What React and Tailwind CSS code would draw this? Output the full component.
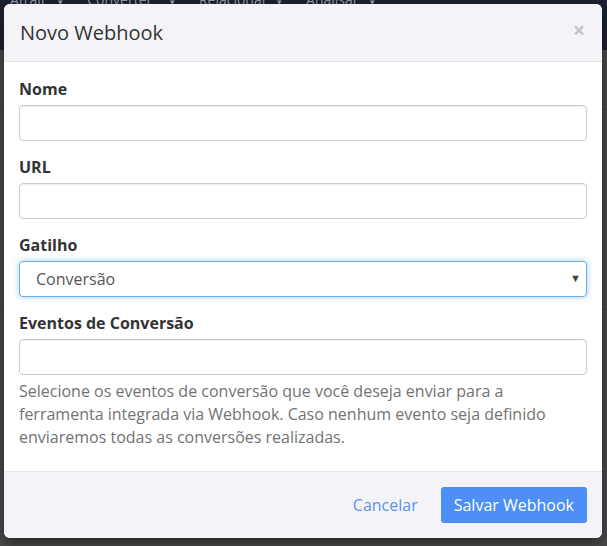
import React from 'react';

const Field = ({ label, children }) => (
  <div className="mb-[15px]">
    <label className="block mb-[5px] text-[16px] leading-[22px] font-bold text-[#333]">{label}</label>
    {children}
  </div>
);

const TextInput = () => (
  <input
    type="text"
    className="block w-full h-[36px] px-3 border border-[#ccc] rounded-[4px] bg-white text-[16px] text-[#555] outline-none shadow-[inset_0_1px_1px_rgba(0,0,0,0.075)]"
  />
);

export default function App() {
  return (
    <div
      className="relative w-[607px] h-[546px] overflow-hidden bg-[#4b4b4b]"
      style={{ fontFamily: '"Open Sans", "Liberation Sans", sans-serif' }}
    >
      {/* page behind the backdrop */}
      <div className="h-[60px] bg-[#1d2230] flex items-start gap-[24px] pl-[10px] -mt-[10px] text-[14px] leading-[20px] text-[#9aa0ab]">
        <span>Atrair <span className="ml-[8px] text-[9px]">▾</span></span>
        <span>Converter <span className="ml-[14px] text-[9px]">▾</span></span>
        <span>Relacionar <span className="ml-[6px] text-[9px]">▾</span></span>
        <span>Analisar <span className="ml-[8px] text-[9px]">▾</span></span>
      </div>
      <div className="h-[60px] border-b border-[#3e3e3e]" />
      <div className="h-[200px] border-b border-[#3e3e3e]" />

      {/* modal */}
      <div className="absolute left-[4px] top-[4px] w-[598px] h-[534px] flex flex-col bg-white rounded-[6px] overflow-hidden shadow-[0_5px_15px_rgba(0,0,0,0.5)]">
        <div className="h-[58px] flex items-center justify-between px-[15px] bg-[#f4f4f8] border-b border-[#e5e5e5]">
          <h4 className="text-[20px] text-[#333] pl-[1px]">Novo Webhook</h4>
          <span className="text-[21px] font-bold leading-none text-[#c2c2c6] mr-[2px] -mt-[4px]">×</span>
        </div>

        <div className="flex-1 px-[15px] pt-[16px]">
          <Field label="Nome">
            <TextInput />
          </Field>
          <Field label="URL">
            <TextInput />
          </Field>
          <Field label="Gatilho">
            <div className="relative">
              <div className="h-[36px] flex items-center pl-[16px] border border-[#66afe9] rounded-[4px] bg-white text-[16px] text-[#555] shadow-[0_0_6px_rgba(102,175,233,0.6)]">
                Conversão
              </div>
              <span className="absolute right-[6px] top-[9px] text-[11px] text-[#444]">▼</span>
            </div>
          </Field>
          <div>
            <label className="block mb-[5px] text-[16px] leading-[22px] font-bold text-[#333]">Eventos de Conversão</label>
            <TextInput />
            <p className="mt-[5px] text-[16px] leading-[23px] text-[#737373]">
              Selecione os eventos de conversão que você deseja enviar para a ferramenta integrada via Webhook. Caso nenhum evento seja definido enviaremos todas as conversões realizadas.
            </p>
          </div>
        </div>

        <div className="h-[67px] flex items-center justify-end gap-[11px] px-[15px] bg-[#f4f4f8] border-t border-[#e5e5e5]">
          <button className="h-[36px] px-[12px] text-[16px] text-[#5a94e6]">Cancelar</button>
          <button className="h-[36px] px-[13px] rounded-[3px] bg-[#4d8ef7] text-[16px] text-white">Salvar Webhook</button>
        </div>
      </div>
    </div>
  );
}
